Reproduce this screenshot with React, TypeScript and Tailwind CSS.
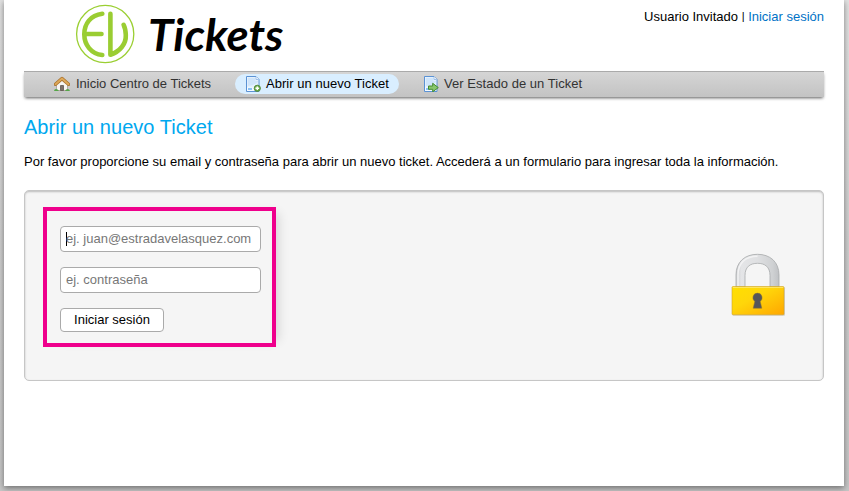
import React from 'react';

function Logo() {
  return (
    <svg width="220" height="66" viewBox="0 0 220 66" className="block" aria-label="EV Tickets">
      <circle cx="31.2" cy="34" r="28.6" fill="none" stroke="#9bcf33" strokeWidth="1.3" />
      <g fill="none" stroke="#9acd32" strokeWidth="4.6" strokeLinecap="round">
        <path d="M28.300 13.800C16.500 15.200 10.300 23.800 10.300 34.200S17 53.900 28.300 55" />
        <path d="M11 34H27.500" />
        <path d="M36.400 13.800V54.800C46 51.500 52.200 44 51.800 35Q51.500 28.500 49.600 24.800" strokeLinejoin="round" />
      </g>
      <text x="74" y="50.8" textLength="135.5" lengthAdjust="spacingAndGlyphs" fontSize="44" fontWeight="700" fontStyle="italic" fontFamily="Lato, sans-serif" fill="#000">Tickets</text>
    </svg>
  );
}

function HouseIcon() {
  return (
    <svg width="16" height="16" viewBox="0 0 16 16" className="shrink-0">
      <path d="M2.500 8L8 3l5.500 5v6.500h-11z" fill="#f7f5f2" stroke="#a79d98" strokeWidth=".8" />
      <path d="M6.500 14.500V9.500h3v5z" fill="#7d7069" stroke="#5f5550" strokeWidth=".8" />
      <path d="M1.500 8.300L8 2.600l6.500 5.700" fill="none" stroke="#a9712c" strokeWidth="3.400" strokeLinejoin="round" strokeLinecap="round" />
      <path d="M1.500 8.200L8 2.500l6.500 5.700" fill="none" stroke="#dda859" strokeWidth="1.800" strokeLinejoin="round" strokeLinecap="round" />
      <path d="M0 15q.3-2 2-2t3 2zM11 15q1-2 2.700-2T16 15z" fill="#55a548" />
    </svg>
  );
}

function PageIcon({ kind }: { kind: 'add' | 'go' }) {
  return (
    <svg width="16" height="16" viewBox="0 0 16 16" className="shrink-0">
      <path d="M1.500.5h9.500l3 3v12H1.500z" fill="#f5faff" stroke="#5b92d4" strokeLinejoin="round" />
      <path d="M2.500 11V1.500h8v3h2.500V11z" fill="#cfe5fb" />
      <path d="M2.500 10q6 0 10.500-4v5.500H2.500z" fill="#e3f1fe" />
      <path d="M11 .8v2.700h2.700" fill="#fff" stroke="#9dc0ea" />
      <path d="M3 13h4" stroke="#7fbcf5" strokeWidth="1.800" />
      {kind === 'add' ? (
        <>
          <circle cx="12.300" cy="12.300" r="3.100" fill="#6fae50" stroke="#4c8433" strokeWidth=".9" />
          <path d="M10.500 12.300h3.600M12.300 10.500v3.600" stroke="#fff" strokeWidth="1.400" />
        </>
      ) : (
        <path d="M5.500 10h4.200V7.300l5.600 4.300-5.600 4.200v-2.500H5.500z" fill="#88c66b" stroke="#438a2f" />
      )}
    </svg>
  );
}

function Padlock() {
  return (
    <svg width="56" height="66" viewBox="0 0 56 66">
      <defs>
        <linearGradient id="body" x1="0" y1="0" x2="1" y2="1">
          <stop offset="0" stopColor="#ffe000" />
          <stop offset=".4" stopColor="#ffd60a" />
          <stop offset="1" stopColor="#ffa600" />
        </linearGradient>
        <linearGradient id="metal" x1="0" x2="1">
          <stop offset="0" stopColor="#cdced0" />
          <stop offset=".13" stopColor="#e4e5e7" />
          <stop offset=".5" stopColor="#dfe0e2" />
          <stop offset=".85" stopColor="#cfd1d3" />
          <stop offset="1" stopColor="#c0c2c5" />
        </linearGradient>
      </defs>
      <path d="M5 35V23C5 9.800 14 2.300 26.500 2.300S48 9.800 48 23v12h-9V23.500C39 15 34 11.300 26.500 11.300S14 15 14 23.500V35z" fill="url(#metal)" stroke="#a7a9ab" strokeWidth=".8" />
      <path d="M7 34V23C7 11 14.500 4.300 26.500 4.300" fill="none" stroke="#f2f2f3" strokeWidth="1.500" />
      <rect x="1.500" y="35.200" width="52.500" height="28.500" rx="1" fill="#d3d1ca" />
      <rect x="1" y="34.500" width="52" height="28.300" rx="1" fill="url(#body)" stroke="#d0a42c" strokeWidth=".6" />
      <path d="M1.800 35.500h50.500" stroke="#ffe873" strokeWidth=".8" />
      <path d="M26.500 41.100a4.600 4.600 0 0 1 2.700 8.300L30.800 56.200h-8.600l1.600-6.800a4.600 4.600 0 0 1 2.700-8.300z" fill="#55565b" stroke="#8d7530" strokeWidth=".5" />
    </svg>
  );
}

export default function App() {
  return (
    <div className="h-[491px] w-[849px] overflow-hidden bg-[linear-gradient(#e2e2e2,#cfcfcf_50%,#c6c6c6)] pl-1 font-['Liberation_Sans',Arial,sans-serif] text-[13px] text-black">
      <main className="h-[486px] w-[840px] bg-white px-5 shadow-[0_2px_6px_rgba(0,0,0,0.45)]">
        <header className="flex h-[71px] justify-between pl-[50px]">
          <Logo />
          <p className="pt-[7px] leading-5 whitespace-nowrap">
            Usuario Invitado <span className="relative -top-px text-[11px]">|</span>{' '}
            <a className="text-[#0072c6]">Iniciar sesión</a>
          </p>
        </header>

        <nav className="flex h-[26px] items-start border-t border-[#aaa] bg-linear-to-b from-[#d5d5d5] to-[#c3c3c3] pt-[2px] pl-5 text-[#333] shadow-[0_2px_3px_-1px_rgba(0,0,0,0.65)]">
          <a className="flex h-5 w-[191px] items-center gap-[6px] pl-[10px] whitespace-nowrap">
            <HouseIcon />
            <span>Inicio Centro de Tickets</span>
          </a>
          <a className="flex h-5 w-[164px] items-center gap-[5px] rounded-full bg-[#d9eeff] pl-[10px] text-black whitespace-nowrap">
            <PageIcon kind="add" />
            <span className="tracking-[0.04px]">Abrir un nuevo Ticket</span>
          </a>
          <a className="ml-6 flex h-5 items-center gap-[5px] whitespace-nowrap">
            <PageIcon kind="go" />
            <span className="tracking-[0.04px]">Ver Estado de un Ticket</span>
          </a>
        </nav>

        <h1 className="mt-[17px] h-[26px] text-[20px] leading-[26px] tracking-[0.03px] text-[#00a8ef]">Abrir un nuevo Ticket</h1>
        <p className="mt-3 h-5 leading-5 whitespace-nowrap">
          Por favor proporcione su email y contraseña para abrir un nuevo ticket. Accederá a un formulario para ingresar toda la información.
        </p>

        <section className="mt-[18px] flex h-[191px] justify-between rounded-[5px] border border-[#c6c6c6] bg-[#f5f5f5] pt-[16px] pr-[36px] pl-[18px] shadow-[inset_0_1px_2px_#bbb]">
          <form className="flex h-[140px] w-[233px] flex-col items-start border-4 border-[#ef008c] pt-[15px] pl-[13px] shadow-[9px_0_10px_-6px_rgba(0,0,0,0.12)]">
            <div className="flex h-[26px] w-[201px] items-center rounded-[4px] border border-[#aaa] bg-white pl-[5px] text-[#777]">
              <span className="-mr-px h-[14px] w-px shrink-0 bg-black" />
              <span>ej. juan@estradavelasquez.com</span>
            </div>
            <div className="mt-[15px] flex h-[26px] w-[201px] items-center rounded-[4px] border border-[#aaa] bg-white pl-[5px] text-[#777]">ej. contraseña</div>
            <button type="button" className="mt-[15px] h-6 w-[104px] rounded-[4px] border border-[#aaa] bg-white leading-[22px]">Iniciar sesión</button>
          </form>
          <div className="mt-[45px]">
            <Padlock />
          </div>
        </section>
      </main>
    </div>
  );
}
